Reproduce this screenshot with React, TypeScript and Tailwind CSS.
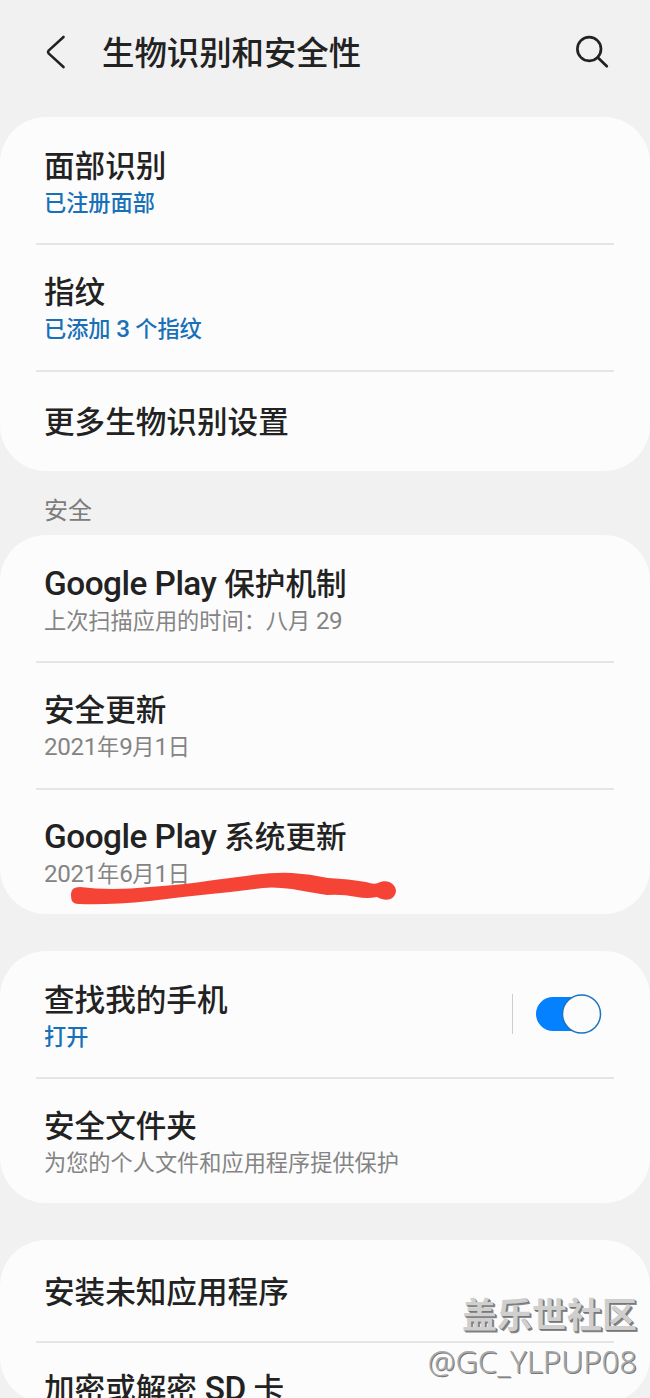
import { Fragment } from "react";
import type { ReactNode } from "react";

type Row = {
  title: string;
  sub?: string;
  active?: boolean;
  toggle?: boolean;
  height: string;
};

const biometrics: Row[] = [
  { title: "面部识别", sub: "已注册面部", active: true, height: "h-[126px] pt-[29px]" },
  { title: "指纹", sub: "已添加 3 个指纹", active: true, height: "h-[125px] pt-[27px]" },
  { title: "更多生物识别设置", height: "h-[99px] pt-[30px]" },
];

const security: Row[] = [
  { title: "Google Play 保护机制", sub: "上次扫描应用的时间：八月 29", height: "h-[126px] pt-[29px]" },
  { title: "安全更新", sub: "2021年9月1日", height: "h-[125px] pt-[27px]" },
  { title: "Google Play 系统更新", sub: "2021年6月1日", height: "h-[124px] pt-[27px]" },
];

const device: Row[] = [
  { title: "查找我的手机", sub: "打开", active: true, toggle: true, height: "h-[126px] pt-[29px]" },
  { title: "安全文件夹", sub: "为您的个人文件和应用程序提供保护", height: "h-[124px] pt-[27px]" },
];

const other: Row[] = [
  { title: "安装未知应用程序", height: "h-[101px] pt-[32px]" },
  { title: "加密或解密 SD 卡", height: "h-[60px] pt-[26px]" },
];

// Latin letters and digits are set a little larger than the Chinese around them
function MixedText({ text }: { text: string }) {
  return (
    <>
      {text.split(/([A-Za-z0-9 ]+)/).map((part, i) =>
        i % 2 === 1 ? (
          <span key={i} className="text-[1.09em] leading-none tracking-[-0.015em]">
            {part}
          </span>
        ) : (
          part
        )
      )}
    </>
  );
}

function Toggle() {
  return (
    <div className="mr-[48px] mt-[14px] flex h-10 items-center">
      <div className="h-10 w-px bg-[#cdcdcd]" />
      <svg className="ml-[23px]" width="66" height="40" viewBox="0 0 66 40">
        <rect x="0" y="3" width="60" height="34" rx="17" fill="#0381fe" />
        <circle cx="45.5" cy="20" r="19" fill="#fcfcfc" stroke="#1b74c0" strokeWidth="1.5" />
      </svg>
    </div>
  );
}

function SettingRow({ row }: { row: Row }) {
  return (
    <div className={`flex justify-between pl-11 ${row.height}`}>
      <div className="whitespace-nowrap">
        <div className="text-[30.6px] leading-[42px] font-medium text-[#222]">
          <MixedText text={row.title} />
        </div>
        {row.sub && (
          <div
            className={`text-[22.2px] leading-[30px] ${
              row.active ? "font-medium text-[#1770b8]" : "text-[#848484]"
            }`}
          >
            <MixedText text={row.sub} />
          </div>
        )}
      </div>
      {row.toggle && <Toggle />}
    </div>
  );
}

function Card({ rows, children }: { rows: Row[]; children?: ReactNode }) {
  return (
    <section className="relative rounded-[46px] bg-[#fcfcfc]">
      {rows.map((row, i) => (
        <Fragment key={row.title}>
          {i > 0 && <div className="mx-9 h-[2px] bg-[#e5e5e5]" />}
          <SettingRow row={row} />
        </Fragment>
      ))}
      {children}
    </section>
  );
}

// Hand drawn marker line under the system update date
function MarkerStroke() {
  return (
    <svg className="absolute left-0 top-[325px]" width="420" height="60" viewBox="0 860 420 60" fill="#f54336">
      <path d="M71 896 Q70 887 80 887 Q110 891 150 887 Q190 884 207 881 Q230 878 246 876 Q272 872 292 873 Q310 874 328 878 Q349 879 366 882 Q374 885 378 883 C387 878 396 884 396 891 C395 900 386 902 377 897 Q367 899 357 897 Q342 894 327 895 Q308 892 292 889 Q270 886 255 889 Q232 892 211 894 Q180 897 150 901 Q110 905 80 904 Q71 905 71 896Z" />
    </svg>
  );
}

export default function App() {
  return (
    <div className="relative h-[1398px] w-[650px] overflow-hidden bg-[#f1f1f1] font-[Roboto,'Noto_Sans_CJK_SC',sans-serif]">
      <header className="flex h-[117px] items-start">
        <svg className="ml-[44px] mt-[33px]" width="24" height="38" viewBox="0 0 24 38" fill="none" stroke="#222" strokeWidth="2.6" strokeLinecap="round" strokeLinejoin="round">
          <path d="M19.5 4 L4.6 17.6 Q3.5 19 4.6 20.4 L19.5 34" />
        </svg>
        <h1 className="ml-[34px] mt-[33px] text-[32.4px] leading-[42px] font-medium text-[#222]">生物识别和安全性</h1>
        <svg className="ml-auto mr-[39px] mt-[33px]" width="38" height="38" viewBox="0 0 38 38" fill="none" stroke="#222" strokeWidth="2.7" strokeLinecap="round">
          <circle cx="16.2" cy="16" r="11.8" />
          <path d="M24.8 24.5 L33.8 33.2" />
        </svg>
      </header>

      <Card rows={biometrics} />
      <h2 className="h-16 pl-11 pt-6 text-[24px] leading-8 text-[#7c7c7c]">安全</h2>
      <Card rows={security}>
        <MarkerStroke />
      </Card>
      <div className="h-[37px]" />
      <Card rows={device} />
      <div className="h-[37px]" />
      <Card rows={other} />

      {/* Watermark */}
      <div className="absolute right-[13px] top-[1295px] text-right whitespace-nowrap">
        <div className="text-[35px] leading-[44px] font-bold text-[#cfcfcf] [text-shadow:1px_1px_0_#777,2px_2px_0_#8a8a8a]">盖乐世社区</div>
        <div className="-mt-px font-['Noto_Sans',sans-serif] text-[31px] leading-[46px] font-light text-[#a8a8a8] [text-shadow:1px_1px_0_#777]">@GC_YLPUP08</div>
      </div>
    </div>
  );
}
